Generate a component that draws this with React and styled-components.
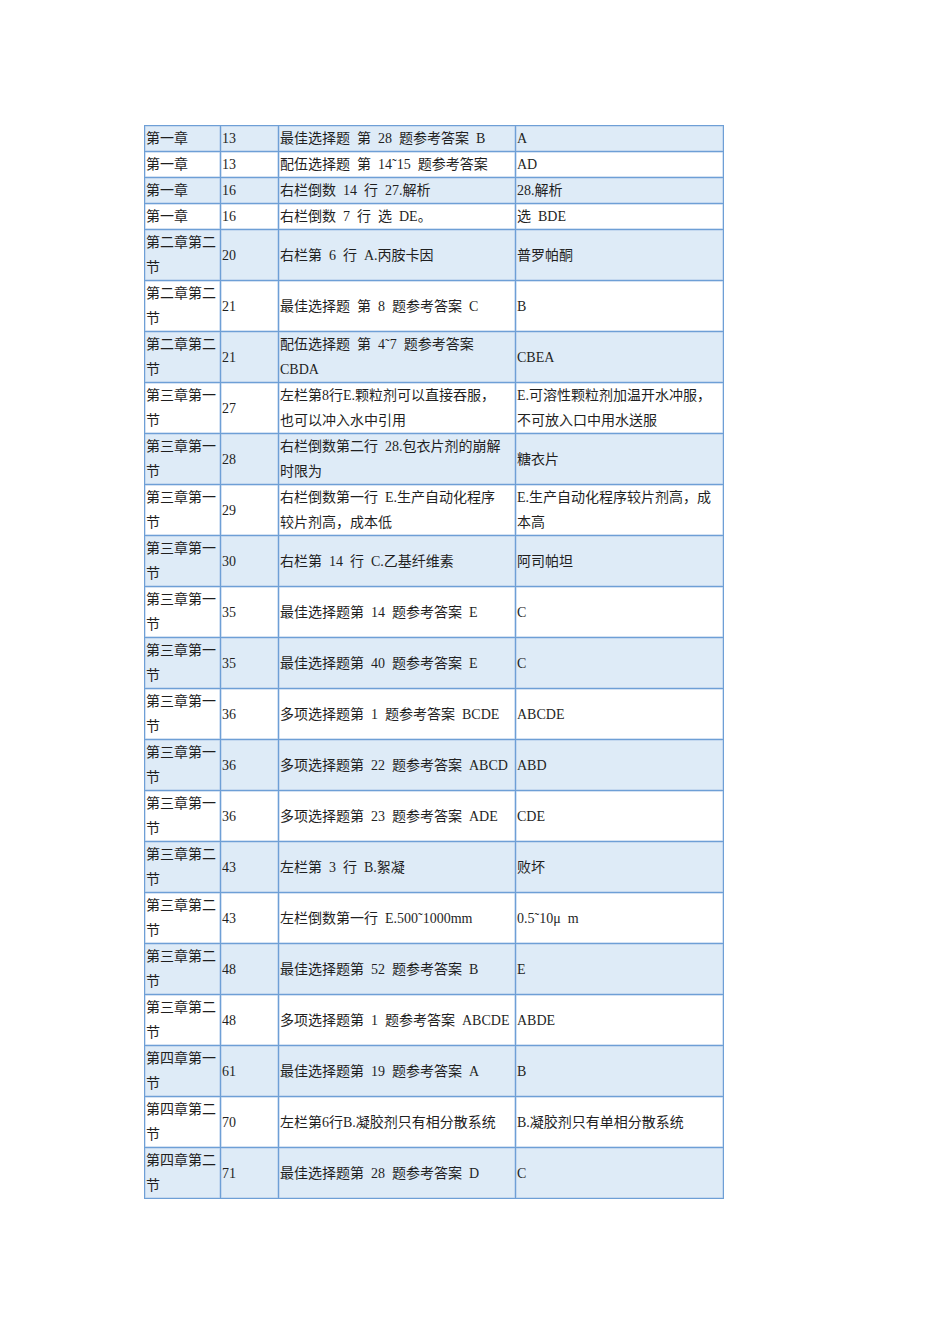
import React from "react";
import styled, { createGlobalStyle } from "styled-components";

const Global = createGlobalStyle`
  html, body { margin: 0; padding: 0; background: #ffffff; }
  body {
    font-family: "Liberation Serif", "Noto Sans CJK SC", serif;
    color: #1f1f1f;
  }
`;

const Page = styled.div`
  width: 950px;
  min-height: 1344px;
  padding: 125px 0 0 144px;
  box-sizing: border-box;
`;

const Table = styled.table`
  border-collapse: collapse;
  table-layout: fixed;
  width: 580px;
  font-size: 14px;
  line-height: 25px;
  word-spacing: 3.5px;
`;

const Row = styled.tr`
  height: ${(p) => (p.$tall ? 51 : 26)}px;
  background: ${(p) => (p.$shaded ? "#deebf7" : "#ffffff")};
`;

const Cell = styled.td`
  border: 1px solid #6e9fd6;
  box-shadow: inset 0 0 0 0.5px #a9c6e8;
  padding: 0 0 0 1px;
  vertical-align: middle;
  text-align: left;
  font-weight: 400;
  white-space: pre;
  overflow: hidden;
`;

const cols = [76, 58, 237, 208];

const rows = [
  ["第一章", "13", "最佳选择题 第 28 题参考答案 B", "A"],
  ["第一章", "13", "配伍选择题 第 14˜15 题参考答案", "AD"],
  ["第一章", "16", "右栏倒数 14 行 27.解析", "28.解析"],
  ["第一章", "16", "右栏倒数 7 行 选 DE。", "选 BDE"],
  ["第二章第二\n节", "20", "右栏第 6 行 A.丙胺卡因", "普罗帕酮"],
  ["第二章第二\n节", "21", "最佳选择题 第 8 题参考答案 C", "B"],
  ["第二章第二\n节", "21", "配伍选择题 第 4˜7 题参考答案\nCBDA", "CBEA"],
  ["第三章第一\n节", "27", "左栏第8行E.颗粒剂可以直接吞服，\n也可以冲入水中引用", "E.可溶性颗粒剂加温开水冲服，\n不可放入口中用水送服"],
  ["第三章第一\n节", "28", "右栏倒数第二行 28.包衣片剂的崩解\n时限为", "糖衣片"],
  ["第三章第一\n节", "29", "右栏倒数第一行 E.生产自动化程序\n较片剂高，成本低", "E.生产自动化程序较片剂高，成\n本高"],
  ["第三章第一\n节", "30", "右栏第 14 行 C.乙基纤维素", "阿司帕坦"],
  ["第三章第一\n节", "35", "最佳选择题第 14 题参考答案 E", "C"],
  ["第三章第一\n节", "35", "最佳选择题第 40 题参考答案 E", "C"],
  ["第三章第一\n节", "36", "多项选择题第 1 题参考答案 BCDE", "ABCDE"],
  ["第三章第一\n节", "36", "多项选择题第 22 题参考答案 ABCD", "ABD"],
  ["第三章第一\n节", "36", "多项选择题第 23 题参考答案 ADE", "CDE"],
  ["第三章第二\n节", "43", "左栏第 3 行 B.絮凝", "败坏"],
  ["第三章第二\n节", "43", "左栏倒数第一行 E.500˜1000mm", "0.5˜10μ m"],
  ["第三章第二\n节", "48", "最佳选择题第 52 题参考答案 B", "E"],
  ["第三章第二\n节", "48", "多项选择题第 1 题参考答案 ABCDE", "ABDE"],
  ["第四章第一\n节", "61", "最佳选择题第 19 题参考答案 A", "B"],
  ["第四章第二\n节", "70", "左栏第6行B.凝胶剂只有相分散系统", "B.凝胶剂只有单相分散系统"],
  ["第四章第二\n节", "71", "最佳选择题第 28 题参考答案 D", "C"],
];

export default function App() {
  return (
    <Page>
      <Global />
      <Table>
        <colgroup>
          {cols.map((w, i) => (
            <col key={i} style={{ width: w }} />
          ))}
        </colgroup>
        <tbody>
          {rows.map((r, i) => (
            <Row key={i} $tall={i >= 4} $shaded={i % 2 === 0}>
              {r.map((c, j) => (
                <Cell key={j}>{c}</Cell>
              ))}
            </Row>
          ))}
        </tbody>
      </Table>
    </Page>
  );
}
